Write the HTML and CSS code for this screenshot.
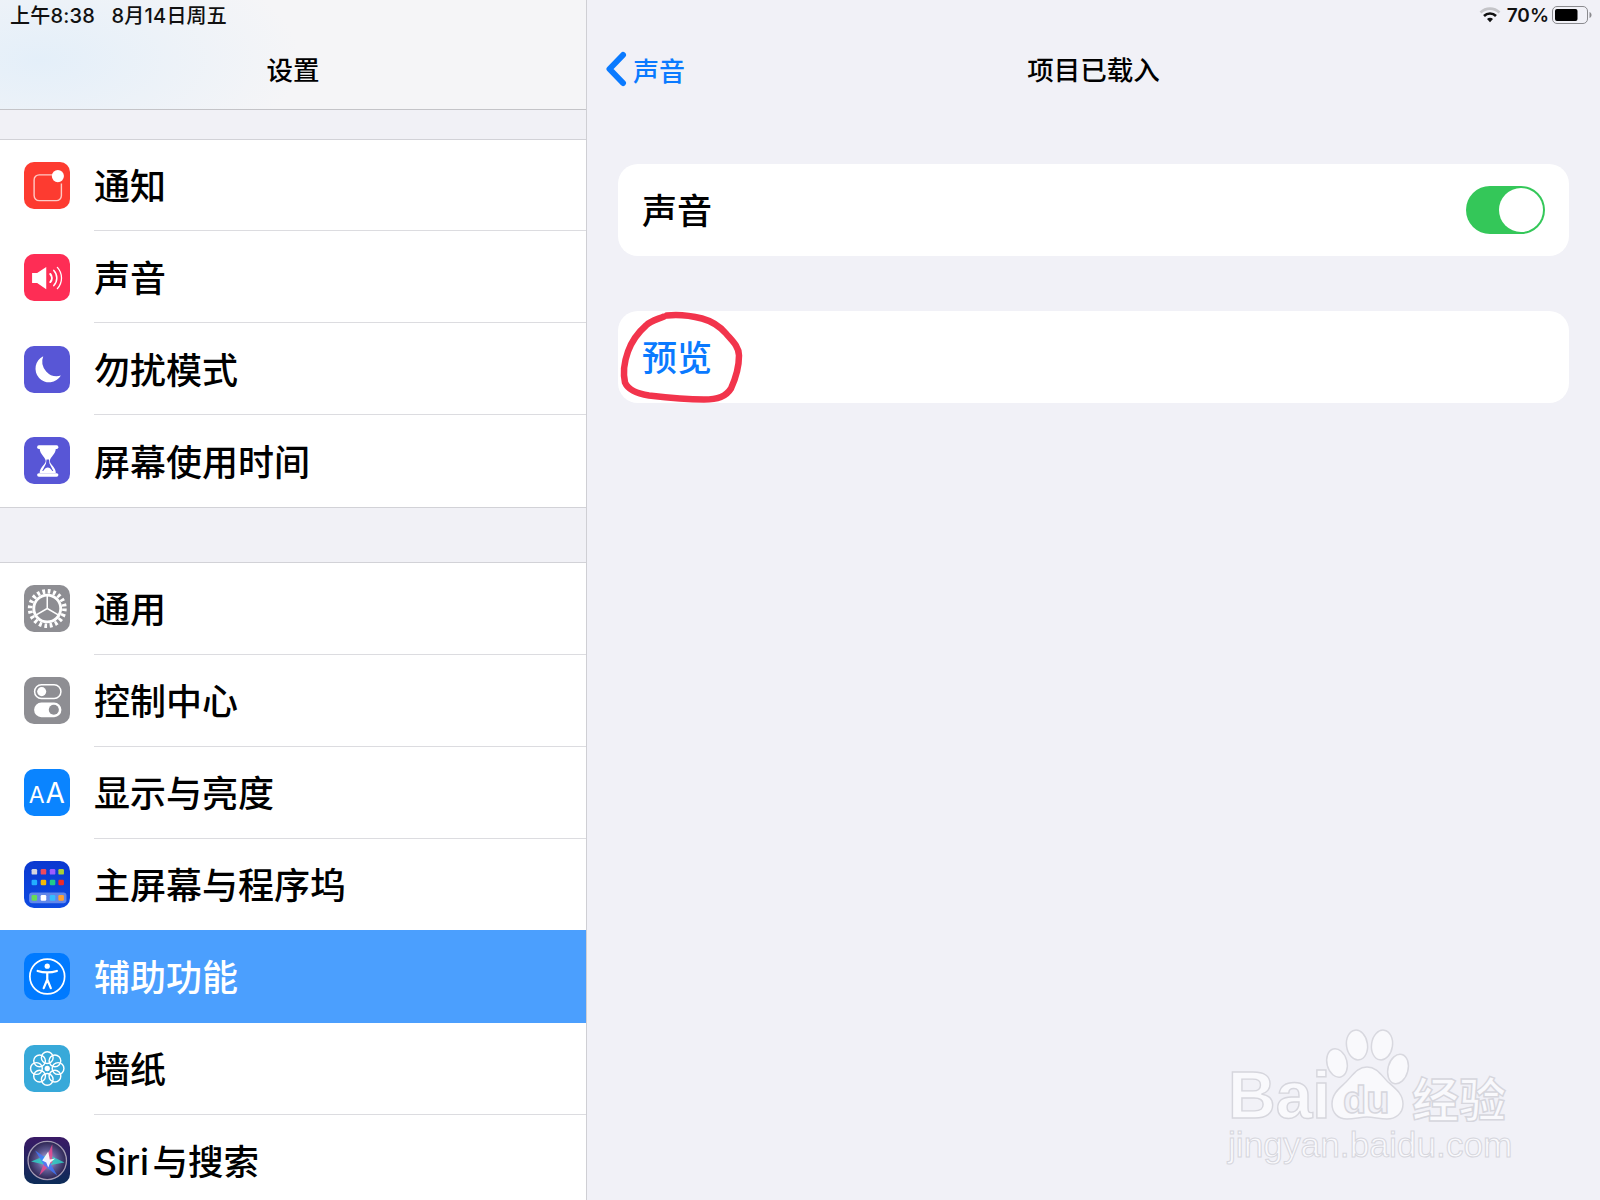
FILE: index.html
```html
<!DOCTYPE html>
<html lang="zh">
<head>
  <meta charset="utf-8">
  <title>设置</title>
  <link rel="stylesheet" href="styles.css">
</head>
<body>
  <div class="app">
    <aside class="sidebar">
      <header class="side-header">
        <div class="status status-left">上午8:38&nbsp;&nbsp;&nbsp;8月14日周五</div>
        <div class="side-title">设置</div>
      </header>

      <section class="group">
        <div class="row first">
          <span class="icon icon-red">
            <svg viewBox="0 0 46 46"><path d="M28 12.500H15a5 5 0 0 0-5 5V33a5 5 0 0 0 5 5h17a5 5 0 0 0 5-5V21" fill="none" stroke="#ffc9c4" stroke-width="1.400"/><circle cx="33.500" cy="13.700" r="6" fill="#fff"/></svg>
          </span>
          <span class="label">通知</span>
        </div>
        <div class="row">
          <span class="icon icon-pink">
            <svg viewBox="0 0 46 46"><path d="M8 18.500h5L22 12.500v22L13 28.500H8z" fill="#fff"/><g fill="none" stroke="#fff" stroke-linecap="round"><path d="M26 19.500a6 6 0 0 1 0 8" stroke-width="2"/><path d="M29.500 16a11 11 0 0 1 0 15" stroke-width="1.500"/><path d="M33 13a15.500 15.500 0 0 1 0 21" stroke-width="1.300"/></g></svg>
          </span>
          <span class="label">声音</span>
        </div>
        <div class="row">
          <span class="icon icon-indigo">
            <svg viewBox="0 0 46 46"><path d="M19 10A13.500 13.500 0 1 0 36.500 29 14.500 14.500 0 0 1 19 10z" fill="#fff"/></svg>
          </span>
          <span class="label">勿扰模式</span>
        </div>
        <div class="row last">
          <span class="icon icon-indigo">
            <svg viewBox="0 0 46 46"><rect x="13" y="8" width="21" height="3.500" rx="1.700" fill="#fff"/><rect x="13" y="35.500" width="21" height="3.500" rx="1.700" fill="#fff"/><path d="M15.500 11h16c0 6-5.500 8.500-6 12.500.5 4 6 6 6 12h-16c0-6 5.500-8 6-12-.5-4-6-6.500-6-12.500z" fill="#fff"/><path d="M22.300 22h2.400l.5 4 3.800 7.500h-11l3.800-7.500z" fill="#5856d6"/><path d="M19 33.500c1.500-2.500 3-3.500 4.500-3.500s3 1 4.500 3.500z" fill="#fff"/></svg>
          </span>
          <span class="label">屏幕使用时间</span>
        </div>
      </section>

      <section class="group group-second">
        <div class="row">
          <span class="icon icon-gray">
            <svg viewBox="0 0 46 46"><g fill="none" stroke="#fff"><circle cx="23" cy="23" r="17" stroke-width="4.500" stroke-dasharray="2.700 2.640"/><circle cx="23" cy="23" r="13.300" stroke-width="2.800"/><path d="M23 23V10M23 23l11.300 6.500M23 23l-11.300 6.500" stroke-width="1.500"/></g></svg>
          </span>
          <span class="label">通用</span>
        </div>
        <div class="row">
          <span class="icon icon-gray">
            <svg viewBox="0 0 46 46"><rect x="10.500" y="7.500" width="26" height="13.500" rx="6.700" fill="none" stroke="#fff" stroke-width="1.500"/><circle cx="17.500" cy="14.200" r="4.500" fill="#fff"/><rect x="10" y="25" width="27" height="14.500" rx="7.200" fill="#fff"/><circle cx="29.500" cy="32.200" r="5" fill="#8e8e93"/></svg>
          </span>
          <span class="label">控制中心</span>
        </div>
        <div class="row">
          <span class="icon icon-blue">
            <span class="aa-small">A</span><span class="aa-big">A</span>
          </span>
          <span class="label">显示与亮度</span>
        </div>
        <div class="row">
          <span class="icon icon-home">
            <svg viewBox="0 0 46 46">
              <rect x="7.500" y="7.700" width="5.500" height="5.500" rx="1.200" fill="#d5d5de"/>
              <rect x="16.500" y="7.700" width="5.500" height="5.500" rx="1.200" fill="#ee4a5c"/>
              <rect x="25.500" y="7.700" width="5.500" height="5.500" rx="1.200" fill="#9c5cff"/>
              <rect x="34" y="7.700" width="5.500" height="5.500" rx="1.200" fill="#a9cf38"/>
              <rect x="7.500" y="18.300" width="5.500" height="5.500" rx="1.200" fill="#22adff"/>
              <rect x="16.500" y="18.300" width="5.500" height="5.500" rx="1.200" fill="#f5b90a"/>
              <rect x="25.500" y="18.300" width="5.500" height="5.500" rx="1.200" fill="#20cc8a"/>
              <rect x="34" y="18.300" width="5.500" height="5.500" rx="1.200" fill="#ee2a2a"/>
              <rect x="5" y="31" width="37" height="10.500" rx="3" fill="#fff" opacity=".35"/>
              <rect x="7.500" y="33.500" width="5.500" height="5.500" rx="1.200" fill="#66dd55"/>
              <rect x="16.500" y="33.500" width="5.500" height="5.500" rx="1.200" fill="#fff"/>
              <rect x="25.500" y="33.500" width="5.500" height="5.500" rx="1.200" fill="#35bcff"/>
              <rect x="34" y="33.500" width="5.500" height="5.500" rx="1.200" fill="#ffa033"/>
            </svg>
          </span>
          <span class="label">主屏幕与程序坞</span>
        </div>
        <div class="row active">
          <span class="icon icon-access">
            <svg viewBox="0 0 46 46"><circle cx="23" cy="23" r="17.200" fill="none" stroke="#fff" stroke-width="1.700"/><circle cx="23" cy="12.800" r="2.600" fill="#fff"/><path d="M13.500 17.500c3 1 6 1.500 9.500 1.500s6.500-.5 9.500-1.500M23 19v7M23 26l-3.500 8.500M23 26l3.500 8.500" fill="none" stroke="#fff" stroke-width="2.200" stroke-linecap="round"/></svg>
          </span>
          <span class="label">辅助功能</span>
        </div>
        <div class="row">
          <span class="icon icon-flower">
            <svg viewBox="0 0 46 46"><g fill="none" stroke="#fff" stroke-width="1.400">
              <circle cx="23" cy="12.300" r="5.800"/><circle cx="30.600" cy="15.400" r="5.800"/><circle cx="33.700" cy="23" r="5.800"/><circle cx="30.600" cy="30.600" r="5.800"/>
              <circle cx="23" cy="33.700" r="5.800"/><circle cx="15.400" cy="30.600" r="5.800"/><circle cx="12.300" cy="23" r="5.800"/><circle cx="15.400" cy="15.400" r="5.800"/>
            </g><circle cx="23" cy="23" r="2.600" fill="#fff"/></svg>
          </span>
          <span class="label">墙纸</span>
        </div>
        <div class="row">
          <span class="icon icon-siri">
            <svg viewBox="0 0 46 46">
              <defs><radialGradient id="siri-glow"><stop offset="0" stop-color="#c9b6e8"/><stop offset=".55" stop-color="#5d5890"/><stop offset="1" stop-color="#2b2350"/></radialGradient></defs>
              <circle cx="23" cy="23" r="19" fill="url(#siri-glow)" stroke="#a39bb4" stroke-width="1.300"/>
              <path d="M7 24 24 17 40 25 24 28z" fill="#30cfc4" opacity=".85"/>
              <path d="M15 38 22 20 28 7 28 25z" fill="#ea4a90" opacity=".85"/>
              <path d="M11 13 24 22 33 38 20 28z" fill="#3f78ff" opacity=".8"/>
              <path d="M18 23 24 14 25.500 22 31 21 26 25 24 30 22 25z" fill="#fff" opacity=".9"/>
            </svg>
          </span>
          <span class="label label-latin">Siri 与搜索</span>
        </div>
      </section>
    </aside>

    <main class="detail">
      <header class="detail-header">
        <div class="status status-right">
          <svg class="wifi" viewBox="0 0 22 16"><g fill="none" stroke-width="2.600"><path d="M1.500 5.500a13.500 13.500 0 0 1 19 0" stroke="#c4c4c8"/><path d="M5 9a8.500 8.500 0 0 1 12 0" stroke="#111"/></g><path d="M8 12a4.200 4.200 0 0 1 6 0l-3 3.200z" fill="#111"/></svg>
          <span>70%</span>
          <svg class="battery" viewBox="0 0 40 18"><rect x=".5" y=".5" width="35" height="17" rx="4.500" fill="none" stroke="#8a8a8e"/><rect x="3" y="3" width="22.500" height="12" rx="2" fill="#000"/><path d="M37.500 6c1.300.5 2 1.600 2 3s-.7 2.500-2 3z" fill="#8a8a8e"/></svg>
        </div>
        <nav class="detail-nav">
          <a class="back" href="#">
            <svg class="chevron" viewBox="0 0 24 36"><path d="M19 4 5.500 18 19 32" fill="none" stroke="#0a7aff" stroke-width="6" stroke-linecap="round" stroke-linejoin="round"/></svg>
            <span>声音</span>
          </a>
          <div class="detail-title">项目已载入</div>
        </nav>
      </header>

      <div class="card">
        <span class="card-label">声音</span>
        <span class="switch"><span class="knob"></span></span>
      </div>

      <div class="card card-preview">
        <span class="card-label card-link">预览</span>
        <svg class="scribble" viewBox="610 305 150 110"><path d="M667 315.500c9-1 23 0 35 3 11 3 18 8 24 15 6 7 13 13 13 22 0 11-3 22-8 33-5 8-13 11-27 11-20 0-38-2-55-4-13-2-21-6-24-13-2-9-1-20 3-31 4-11 10-19 18-26 5-5 11-6 18-9" fill="none" stroke="#f2344c" stroke-width="6.500" stroke-linecap="round" stroke-linejoin="round"/></svg>
      </div>

      <svg class="watermark" viewBox="1200 1010 330 170">
        <g class="wm-shape">
          <ellipse cx="1337" cy="1063" rx="10" ry="14.500" transform="rotate(-15 1337 1063)"/>
          <ellipse cx="1357" cy="1045" rx="10.500" ry="15" transform="rotate(-8 1357 1045)"/>
          <ellipse cx="1382" cy="1045" rx="10.500" ry="15" transform="rotate(8 1382 1045)"/>
          <ellipse cx="1398" cy="1069" rx="10" ry="15" transform="rotate(15 1398 1069)"/>
          <path d="M1367 1067c10 0 14 8 21 15 8 7 15 12 15 22 0 10-8 15-16 15-8 0-13-2-20-2s-12 2-20 2c-9 0-15-6-15-15 0-11 8-16 14-22 7-7 11-15 21-15z"/>
        </g>
        <text class="wm-text wm-big" x="1228" y="1118">Bai</text>
        <text class="wm-text wm-du" x="1343" y="1113">du</text>
        <text class="wm-text wm-cn" x="1412" y="1117">经验</text>
        <text class="wm-text wm-url" x="1228" y="1157">jingyan.baidu.com</text>
      </svg>
    </main>
  </div>
</body>
</html>
```

FILE: styles.css
```css
html, body {
  margin: 0;
  padding: 0;
  height: 1200px;
  overflow: hidden;
}
body {
  font-family: "Noto Sans CJK SC", "Inter", sans-serif;
  background-color: #f1f1f7;
  color: #000;
}
.app {
  display: flex;
  height: 1200px;
}

/* left column */
.sidebar {
  width: 587px;
  box-sizing: border-box;
  flex-shrink: 0;
  height: 1200px;
  overflow: hidden;
  border-right: 1px solid #cfcfd4;
  background-color: #f1f1f6;
}
.side-header {
  height: 110px;
  box-sizing: border-box;
  border-bottom: 1px solid #c4c4c8;
  background:
    radial-gradient(ellipse 260px 120px at 40px 60px, #e4eff9 0%, rgba(228, 239, 249, 0) 100%),
    #f5f5f7;
}
.status {
  height: 30px;
  display: flex;
  align-items: center;
  font-family: "Inter", "Noto Sans CJK SC", sans-serif;
  font-size: 19px;
  font-weight: 600;
  color: #111;
}
.status-left {
  height: 28px;
  padding-left: 10px;
  font-size: 20px;
  font-weight: 500;
  letter-spacing: .2px;
}
.side-title {
  height: 81px;
  line-height: 82px;
  text-align: center;
  font-size: 26.500px;
  font-weight: 500;
}

.group {
  margin-top: 29px;
  background-color: #fff;
  border-top: 1px solid #d2d2d7;
  border-bottom: 1px solid #d2d2d7;
}
.group-second {
  margin-top: 54px;
}
.row {
  display: flex;
  align-items: center;
  height: 92px;
  padding-left: 23.500px;
}
.row.first {
  height: 91px;
}
.row.last {
  height: 91.500px;
}
.row.last .label {
  border-bottom: none;
}
.row.active {
  position: relative;
  height: 93px;
  margin-top: -1px;
  background-color: #4b9ffe;
  color: #fff;
}
.row.active .label {
  border-bottom: none;
}
.label {
  flex: 1;
  display: flex;
  align-items: center;
  height: 100%;
  box-sizing: border-box;
  margin-left: 24px;
  padding-bottom: 2px;
  font-size: 36px;
  font-weight: 500;
  border-bottom: 1px solid #dcdce0;
}
.label-latin {
  font-family: "Inter", "Noto Sans CJK SC", sans-serif;
  font-weight: 500;
  font-size: 35.500px;
  word-spacing: -6px;
}

.icon {
  width: 46.500px;
  height: 47px;
  flex-shrink: 0;
  border-radius: 10px;
  display: flex;
  align-items: center;
  justify-content: center;
  overflow: hidden;
}
.icon svg {
  width: 100%;
  height: 100%;
  display: block;
}
.icon-red { background-color: #fd3b30; }
.icon-pink { background-color: #fe2d55; }
.icon-indigo { background-color: #5856d6; }
.icon-gray { background-color: #8e8e93; }
.icon-blue { background-color: #0a84ff; color: #fff; align-items: baseline; padding-top: 7px; box-sizing: border-box; }
.icon-home { background: linear-gradient(#0a38d0, #0e4be2); }
.icon-access { background-color: #007aff; }
.icon-flower { background-color: #38a9d9; }
.icon-siri { background: linear-gradient(#3a1a66, #0c2c58); }
.aa-small {
  font-family: "Inter", sans-serif;
  font-size: 23px;
  font-weight: 400;
  margin-right: 1px;
}
.aa-big {
  font-family: "Inter", sans-serif;
  font-size: 28px;
  font-weight: 400;
}

/* right column */
.detail {
  flex: 1;
  position: relative;
  padding: 0 31px;
}
.detail-header {
  margin: 0 -31px;
  height: 109px;
}
.status-right {
  justify-content: flex-end;
  padding-right: 8px;
}
.wifi {
  width: 22px;
  height: 16px;
  margin-right: 6px;
}
.battery {
  width: 40px;
  height: 18px;
  margin-left: 3px;
}
.detail-nav {
  position: relative;
  height: 78px;
  display: flex;
  align-items: center;
  justify-content: center;
}
.detail-title {
  font-size: 26.500px;
  font-weight: 500;
  margin-bottom: 2px;
}
.back {
  position: absolute;
  left: 17px;
  top: 0;
  height: 100%;
  display: flex;
  align-items: center;
  color: #0a7aff;
  font-size: 26px;
  font-weight: 500;
  text-decoration: none;
}
.chevron {
  width: 24px;
  height: 36px;
  margin-right: 5px;
}

.card {
  display: flex;
  align-items: center;
  justify-content: space-between;
  height: 92px;
  margin-top: 55px;
  padding: 0 24px;
  background-color: #fff;
  border-radius: 20px;
}
.card-label {
  font-size: 35px;
  font-weight: 500;
  margin-bottom: 4px;
}
.card-link {
  color: #0a7aff;
}
.card-preview {
  position: relative;
}
.switch {
  width: 79px;
  height: 48px;
  border-radius: 24px;
  background-color: #34c759;
  display: flex;
  align-items: center;
  justify-content: flex-end;
  padding-right: 2px;
  box-sizing: border-box;
}
.knob {
  width: 44px;
  height: 44px;
  border-radius: 50%;
  background-color: #fff;
}
.scribble {
  position: absolute;
  left: -8px;
  top: -6px;
  width: 150px;
  height: 110px;
}

.watermark {
  position: absolute;
  left: 613px;
  top: 1010px;
  width: 330px;
  height: 170px;
}
.wm-shape {
  fill: #f9f9fc;
  stroke: #d8d8df;
  stroke-width: 1.500;
}
.wm-text {
  fill: #f9f9fc;
  stroke: #d6d6dd;
  stroke-width: 1.400;
  font-family: "Liberation Sans", sans-serif;
}
.wm-big {
  font-size: 66px;
  font-weight: 700;
}
.wm-du {
  font-size: 38px;
  font-weight: 700;
  fill: #f1f1f7;
}
.wm-cn {
  font-family: "Noto Sans CJK SC", sans-serif;
  font-size: 47px;
  font-weight: 700;
}
.wm-url {
  font-size: 35.300px;
  stroke-width: 1;
}
```
